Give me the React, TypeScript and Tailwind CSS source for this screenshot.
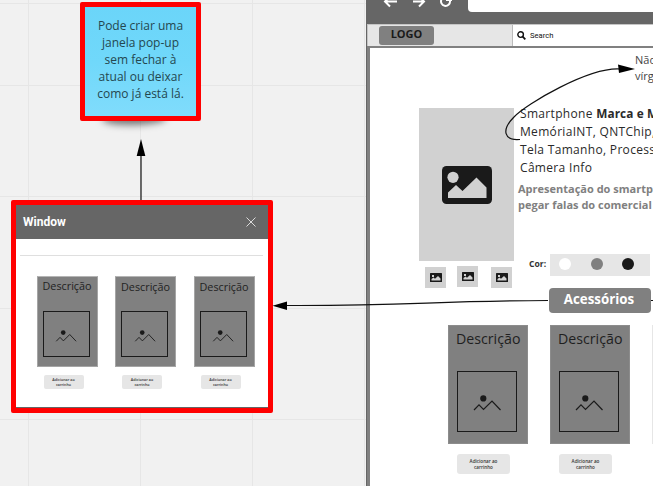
import React from 'react';

function Mountain({ className }: { className: string }) {
  return (
    <svg viewBox="0 0 28 16" className={className} fill="none">
      <circle cx="10.3" cy="3.4" r="3.1" fill="#1a1a1a" />
      <path d="M1 15L6 9.8L10.5 14.5L19 6L27.5 15" stroke="#1a1a1a" strokeWidth="1.2" />
    </svg>
  );
}

function Photo({ className }: { className: string }) {
  return (
    <svg viewBox="0 0 50 38" className={className}>
      <rect width="50" height="38" rx="4.5" fill="#1a1a1a" />
      <circle cx="11" cy="11.3" r="5.6" fill="#d1d1d1" />
      <path d="M6 32V26.5L14 19L20.5 25L34.5 11.5L44.5 21.5V32Z" fill="#d1d1d1" />
    </svg>
  );
}

function Thumb({ className }: { className: string }) {
  return (
    <div className={`flex h-[21px] w-[21px] items-center justify-center bg-[#d1d1d1] ${className}`}>
      <svg viewBox="0 0 12 9" className="h-[9px] w-[12px]">
        <rect width="12" height="9" rx=".5" fill="#1a1a1a" />
        <rect x="2" y="2" width="2" height="2" fill="#d1d1d1" />
        <path d="M1.5 7.5V6L3.5 4.6L5 5.8L8 3L10.5 5.5V7.5Z" fill="#d1d1d1" />
      </svg>
    </div>
  );
}

function SmallCard({ shift }: { shift: string }) {
  return (
    <div className="flex w-[61px] flex-col items-start">
      <div className="flex h-[91px] w-[61px] flex-col border border-[#a5a5a5] border-t-[#b5b5b5] bg-[#808080] pl-[5px]">
        <div className={`h-[34px] whitespace-nowrap text-[10.8px] leading-[14px] text-[#1f1f1f] ${shift}`}>Descrição</div>
        <div className="flex h-[46px] w-[47px] items-center justify-center border border-[#1a1a1a] pt-[3px]">
          <Mountain className="h-[12px] w-[22px]" />
        </div>
      </div>
      <div className="ml-[7px] mt-2 flex h-[14px] w-[40px] flex-col items-center justify-center rounded-[2px] bg-[#e6e6e6] text-[3.7px] font-semibold leading-[5px] text-[#333]">
        <span>Adicionar ao</span>
        <span>carrinho</span>
      </div>
    </div>
  );
}

function BigCard() {
  return (
    <div className="flex w-[80px] shrink-0 flex-col items-start">
      <div className="flex h-[119px] w-[80px] flex-col border border-[#8c8c8c] bg-[#808080] pl-2">
        <div className="-ml-px h-[45px] whitespace-nowrap pt-[3px] text-[14.2px] leading-[19px] text-[#1f1f1f]">Descrição</div>
        <div className="flex h-[61px] w-[60px] items-center justify-center border border-[#1a1a1a] pt-[2px]">
          <Mountain className="h-[16px] w-[28px]" />
        </div>
      </div>
      <div className="ml-[9px] mt-[10px] flex h-[20px] w-[53px] flex-col items-center justify-center rounded-[3px] bg-[#e6e6e6] text-[4.6px] font-semibold leading-[6.5px] text-[#333]">
        <span>Adicionar ao</span>
        <span>carrinho</span>
      </div>
    </div>
  );
}

function StickyNote() {
  return (
    <div className="absolute left-[80px] top-[2px]">
      <div className="absolute left-[22px] top-[106px] h-[12px] w-[64px] -rotate-1 rounded-[50%] shadow-[0_5px_7px_rgba(0,0,0,0.5)]" />
      <div className="relative flex h-[119px] w-[121px] flex-col items-center rounded-[2px] border-[5px] border-[#ff0000] bg-gradient-to-b from-[#6bd5f9] via-[#70d8fa] to-[#80dcfc] pt-[10px] text-[12px] leading-[17px] text-[#24474f]">
        <span>Pode criar uma</span>
        <span>janela pop-up</span>
        <span>sem fechar à</span>
        <span>atual ou deixar</span>
        <span>como já está lá.</span>
      </div>
    </div>
  );
}

function PopupWindow() {
  return (
    <div className="absolute left-[11px] top-[200px] flex h-[213px] w-[262px] flex-col rounded-[2px] border-[5px] border-[#ff0000] bg-white">
      <div className="flex h-[34px] shrink-0 items-center justify-between bg-[#666] pl-[7px] pr-[12px]">
        <span className="font-[Roboto,sans-serif] text-[12px] font-bold text-white">Window</span>
        <svg viewBox="0 0 10 10" className="h-[10px] w-[10px]">
          <path d="M.5.5L9.5 9.5M9.5.5L.5 9.5" stroke="#e8e8e8" strokeWidth=".9" />
        </svg>
      </div>
      <div className="ml-1 mr-[5px] mt-[16px] h-px shrink-0 bg-[#dfdfdf]" />
      <div className="flex gap-[17.5px] pl-[20.5px] pt-[20px]">
        <SmallCard shift="pt-[2px]" />
        <SmallCard shift="pt-[3px]" />
        <SmallCard shift="pt-[3px]" />
      </div>
      <div className="mt-auto h-px bg-[#666]" />
    </div>
  );
}

function BrowserFrame() {
  return (
    <div className="absolute left-[366px] top-0 flex h-[486px] w-[287px] flex-col overflow-hidden border-l border-[#666] bg-white">
      <div className="flex h-[24px] shrink-0 bg-[#666]">
        <svg viewBox="0 0 101 24" className="h-[24px] w-[101px]" fill="none" stroke="#fff" strokeWidth="2">
          <path d="M30 1.5H18M23 -3.5L18 1.5L23 6.5M46 1.5H57M52 -3.5L57 1.5L52 6.5" />
          <path d="M83 1A4.5 4.5 0 1 1 81.5 -2M84 -3V0H79" />
        </svg>
        <div className="h-[12px] flex-1 rounded-bl-[4px] bg-white" />
      </div>
      <div className="flex h-[22px] shrink-0 border-l border-t border-[#c5c5c5] bg-[#e6e6e6]">
        <div className="w-[145px] border-r border-[#bbb] pl-[11px] pt-[1px]">
          <div className="flex h-[19px] w-[55px] items-center justify-center rounded-[3px] bg-[#808080] pb-[2px] text-[11px] font-bold text-[#1a1a1a]">LOGO</div>
        </div>
        <div className="flex flex-1 items-center bg-white pl-[4px]">
          <svg viewBox="0 0 9 9" className="h-[9px] w-[9px]" fill="none" stroke="#111">
            <circle cx="3.6" cy="3.6" r="2.8" strokeWidth="1.4" />
            <path d="M5.7 5.7L8.3 8.3" strokeWidth="1.8" />
          </svg>
          <span className="ml-[4px] font-[Roboto,sans-serif] text-[7.6px] leading-[12px] text-[#111]">Search</span>
        </div>
      </div>
      <div className="flex-1 border-l-[3px] border-t-2 border-[#808080] bg-white">
        <div className="ml-[265px] h-[60px] whitespace-nowrap pt-[4px] text-[11px] leading-[16px] text-[#444]">
          <div>Não</div>
          <div>vírg</div>
        </div>
        <div className="flex h-[144px]">
          <div className="ml-[49px] flex h-[153px] w-[95px] shrink-0 items-center justify-center bg-[#d1d1d1]">
            <Photo className="h-[38px] w-[50px]" />
          </div>
          <div className="ml-[4px] whitespace-nowrap">
            <div className="-mt-[4px] pl-[2px] text-[12px] leading-[18px] tracking-[0.32px] text-[#2a2a2a]">
              <div>Smartphone <span className="text-[11.8px] font-bold tracking-[0.1px]">Marca e M</span></div>
              <div>MemóriaINT, QNTChip,</div>
              <div>Tela Tamanho, Process</div>
              <div>Câmera Info</div>
            </div>
            <div className="mt-[4px] text-[11px] font-bold leading-[16px] text-[#808080]">
              <div>Apresentação do smartp</div>
              <div>pegar falas do comercial</div>
            </div>
          </div>
        </div>
        <div className="flex h-[36px]">
          <div className="ml-[55px] flex w-[104px] gap-[11px] pt-[14px]">
            <Thumb className="mt-[1px]" />
            <Thumb className="" />
            <Thumb className="ml-[2px] mt-[1px]" />
          </div>
          <div className="flex h-[22px] items-center pt-[4px]">
            <span className="w-[21px] pb-[2px] text-[8.6px] font-bold text-[#333]">Cor:</span>
            <div className="flex h-[22px] w-[100px] items-center gap-[19.5px] bg-[#e6e6e6] pb-[2px] pl-[9px]">
              <i className="h-[12px] w-[12px] rounded-full bg-white" />
              <i className="h-[12px] w-[12px] rounded-full bg-[#808080]" />
              <i className="h-[12px] w-[12px] rounded-full bg-[#1a1a1a]" />
            </div>
          </div>
        </div>
        <div className="ml-[179px] flex h-[25px] w-[102px] items-center justify-center rounded-[4px] bg-[#808080] pb-[2px] pr-[2px] text-[13.3px] font-bold text-white">Acessórios</div>
        <div className="ml-[78px] mt-[12px] flex gap-[22px]">
          <BigCard />
          <BigCard />
          <div className="h-[119px] w-px border-l border-[#e6e6e6]" />
        </div>
      </div>
    </div>
  );
}

function Connectors() {
  return (
    <svg viewBox="0 0 653 486" className="pointer-events-none absolute left-0 top-0 h-[486px] w-[653px]" fill="none" stroke="#111" strokeWidth="1.2">
      <path d="M141 200V155" />
      <path d="M141 139L145.3 156H136.7Z" fill="#000" stroke="none" />
      <path d="M548 300.5C430 301 410 306 287 305.5" />
      <path d="M272.5 305.7L287 301.5V310Z" fill="#000" stroke="none" />
      <path d="M520 139.5C504 141 501 130 514 117C526 104 589 67 620 69" />
      <path d="M635 69L618 64.5L619 73Z" fill="#000" stroke="none" />
      <path d="M651 300.5H653" />
    </svg>
  );
}

export default function App() {
  return (
    <main className="relative h-[486px] w-[653px] overflow-hidden bg-[#f1f1f1] font-['Open_Sans','Noto_Sans',sans-serif]">
      <svg viewBox="0 0 653 486" className="absolute left-0 top-0 h-[486px] w-[653px]" stroke="#e6e6e6">
        <path d="M28.5 0V486M140.5 0V486M252.5 0V486M364.5 0V486M0 3.5H366M0 85.5H366M0 196.5H366M0 308.5H366M0 419.5H366" />
      </svg>
      <StickyNote />
      <PopupWindow />
      <BrowserFrame />
      <Connectors />
    </main>
  );
}
